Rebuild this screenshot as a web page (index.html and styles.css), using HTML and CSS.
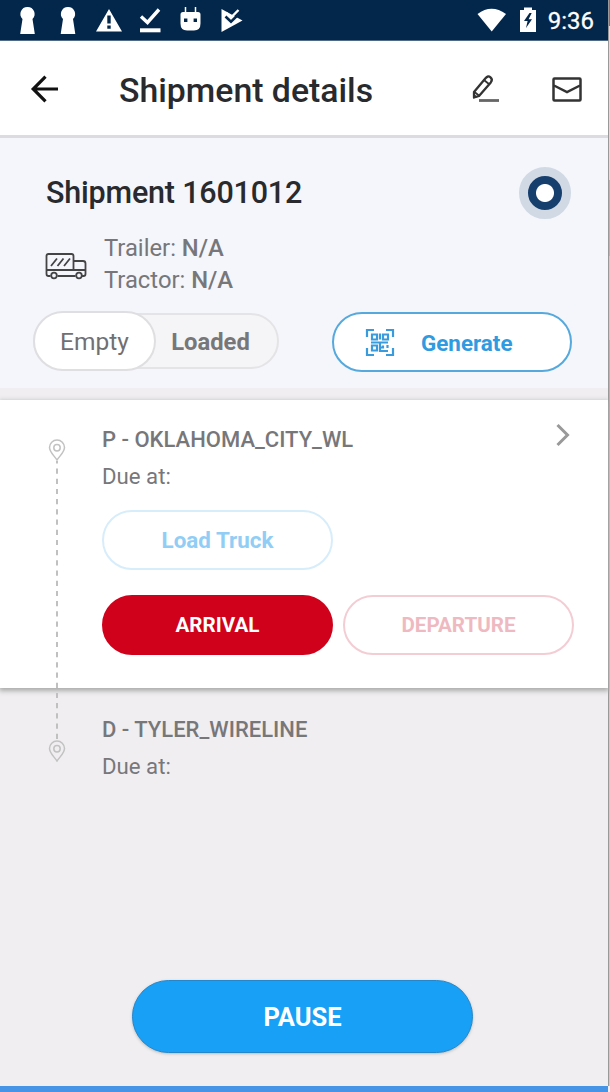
FILE: index.html
```html
<!DOCTYPE html>
<html lang="en">
  <head>
    <meta charset="UTF-8" />
    <meta name="viewport" content="width=device-width, initial-scale=1.0" />
    <title>Shipment details</title>
    <link rel="stylesheet" href="styles.css">
  </head>
  <body>
    <div class="screen">
      <div class="phone">
        <div class="status-bar">
          <svg class="status-icons" width="260" height="41" viewBox="0 0 260 41" fill="#fff">
            <!-- keyholes -->
            <path d="M27.500 7a7 7 0 0 1 5 12l2.300 15H20.200l2.300-15a7 7 0 0 1 5-12z" />
            <path d="M68 7a7 7 0 0 1 5 12l2.300 15H60.700L63 19a7 7 0 0 1 5-12z" />
            <!-- warning -->
            <path fill-rule="evenodd" d="M109 9l13 22.500H96zM107.300 15.500v8h3.400v-8zM107.300 25.500v3.300h3.400v-3.300z" />
            <!-- done -->
            <path d="M141 16.500l6.500 6L159 9.500" fill="none" stroke="#fff" stroke-width="3.400" />
            <rect x="140" y="28.300" width="20.500" height="4" />
            <!-- android -->
            <path d="M185.500 7v7M195.500 7v7" stroke="#fff" stroke-width="1.500" />
            <path fill-rule="evenodd" d="M183 12h15q2.500 0 2.500 2.500v9q0 7-6.500 7h-7q-6.500 0-6.500-7v-9q0-2.500 2.500-2.500zM184 18.500v3.400h3.400v-3.400zM193.600 18.500v3.400h3.400v-3.400z" />
            <!-- play check -->
            <path d="M221.500 9L242.500 20.500 221.500 32z" />
            <path d="M225.500 16.500l5.500 5.300L243 10" fill="none" stroke="#03264b" stroke-width="2.600" />
            <path d="M226.500 13l4.500 4.500L238.500 10" fill="none" stroke="#fff" stroke-width="2.400" />
          </svg>
          <div class="status-right">
            <svg width="30" height="24" viewBox="0 0 30 24" fill="#fff">
              <path d="M0.500 6Q14.500-4.500 29 6L14.700 23.500z" />
            </svg>
            <svg width="18" height="26" viewBox="0 0 18 26">
              <path fill="#fff" d="M5 0.500h8v2.500h4v22H1V3h4z" />
              <path fill="#03264b" d="M10.500 6L5 14h3.600L7 21l6-8.800H9.600L12.700 6z" />
            </svg>
            <span class="clock">9:36</span>
          </div>
        </div>

        <div class="header">
          <svg class="back" width="30" height="28" viewBox="0 0 30 28" fill="none" stroke="#111" stroke-width="3.200">
            <path d="M28 14H4M15.500 1.700L3.200 14 15.500 26.300" />
          </svg>
          <h1>Shipment details</h1>
          <div class="header-actions">
            <svg width="28" height="28" viewBox="0 0 28 28" fill="none" stroke="#333" stroke-width="2.300">
              <path d="M2 22.500V17L13.500 3.200q2.500-3 5-.8t.3 5L7 21z" stroke-linejoin="round" />
              <path d="M12 5l5.500 4.500M2.500 17l5 4" stroke-width="1.800" />
              <path d="M1.300 23.500v-5l4.500 3.500z" fill="#333" stroke="none" />
              <path d="M7 25.500h20" stroke="#666" stroke-width="2.800" />
            </svg>
            <svg width="30" height="25" viewBox="0 0 30 25" fill="none" stroke="#333" stroke-width="2.500">
              <rect x="1.500" y="1.500" width="27" height="22" rx="1" />
              <path d="M2 8.500l13 6.500 13-6.500" />
            </svg>
          </div>
        </div>

        <div class="summary">
          <div class="summary-top">
            <h2>Shipment 1601012</h2>
            <div class="radio"></div>
          </div>

          <div class="vehicle">
            <svg width="42" height="28" viewBox="0 0 42 28" fill="none" stroke="#444" stroke-width="1.800">
              <path d="M5.500 24H3.500Q1.500 24 1.500 22V4Q1.500 2 3.500 2h23Q28.500 2 28.500 4v14M12.500 24h18M37 24h1.500q2 0 2-2V11.500q0-2.500-2.500-2.500h-9.500M1.500 18h39" />
              <path d="M6 14L12 6.500M12.500 14L18.500 6.500M19 14L25 6.500" />
              <circle cx="9" cy="23.500" r="2.800" />
              <circle cx="34" cy="23.500" r="2.800" />
            </svg>
            <div class="vehicle-info">
              <div>Trailer: <b>N/A</b></div>
              <div>Tractor: <b>N/A</b></div>
            </div>
          </div>

          <div class="summary-actions">
            <div class="toggle">
              <div class="toggle-on">Empty</div>
              <div class="toggle-off">Loaded</div>
            </div>
            <button class="btn generate">
              <svg width="30" height="29" viewBox="0 0 30 29" fill="none" stroke="#3a9bdc" stroke-width="2.200">
                <path d="M2 9V2h7M21 2h7v7M28 20v7h-7M9 27H2v-7" />
                <path d="M7 6.500h5v5H7zM18 6.500h5v5h-5zM7 17.500h5v5H7z" />
                <path d="M15 5.500v6M6 14.500h9v4M15 14.500h8M18 17.500v2h-3v3.500h8M22.500 17v3" />
              </svg>
              <span>Generate</span>
            </button>
          </div>
        </div>

        <div class="stops">
          <div class="stop active">
            <div class="stop-head">
              <div class="stop-name">P - OKLAHOMA_CITY_WL</div>
              <svg width="16" height="24" viewBox="0 0 16 24" fill="none" stroke="#999" stroke-width="3">
                <path d="M2.500 2L12.500 12 2.500 22" />
              </svg>
            </div>
            <div class="due">Due at:</div>
            <button class="btn load">Load Truck</button>
            <div class="stop-buttons">
              <button class="btn arrival">ARRIVAL</button>
              <button class="btn departure">DEPARTURE</button>
            </div>
          </div>

          <div class="stop next">
            <div class="stop-name">D - TYLER_WIRELINE</div>
            <div class="due">Due at:</div>
          </div>

          <!-- route line laid over both stops -->
          <svg class="route" width="18" height="326" viewBox="0 0 18 326" fill="none" stroke="#c2c2c2" stroke-width="1.500">
            <path d="M9 21C6 16.500 1.500 13 1.500 8.500a7.500 7.500 0 0 1 15 0C16.500 13 12 16.500 9 21z" />
            <circle cx="9" cy="8.700" r="3.200" />
            <path d="M9 22V301" stroke="#c0c0c0" stroke-width="2" stroke-dasharray="5.200 5" stroke-dashoffset="2.700" />
            <path d="M9 322C6 317.500 1.500 314 1.500 309.500a7.500 7.500 0 0 1 15 0C16.500 314 12 317.500 9 322z" />
            <circle cx="9" cy="309.700" r="3.200" />
          </svg>
        </div>

        <div class="footer">
          <button class="btn pause">PAUSE</button>
        </div>
      </div>
      <div class="edge"></div>
    </div>
    <div class="bottom-line"></div>
  </body>
</html>
```
FILE: styles.css
```css
* {
  box-sizing: border-box;
}
body {
  margin: 0;
  width: 610px;
  height: 1092px;
  overflow: hidden;
  font-family: Roboto, sans-serif;
  background-color: #f0eef1;
  color: #77777a;
}
svg {
  display: block;
  flex: none;
}
h1,
h2 {
  margin: 0;
  font-weight: 500;
  color: #292a2d;
  white-space: nowrap;
}
.screen {
  display: flex;
  height: 1086px;
}
.phone {
  width: 608px;
  display: flex;
  flex-direction: column;
}
.edge {
  width: 2px;
  border-left: 1px solid #999;
  background: linear-gradient(
    #777 0 26px,
    #ddd 26px 180px,
    #9dbdcb 180px 256px,
    #ccc 256px 340px,
    #9dbdcb 340px 440px,
    #ccc 440px
  );
}
.bottom-line {
  width: 608px;
  height: 6px;
  background-color: #4594e5;
}
.status-bar {
  height: 41px;
  display: flex;
  justify-content: space-between;
  background-color: #03264b;
  border-bottom: 1px solid #4f6b88;
}
.status-right {
  display: flex;
  align-items: center;
  padding-right: 14px;
}
.status-right svg + svg {
  margin-left: 12px;
}
.clock {
  margin-left: 11px;
  padding-top: 2px;
  font-size: 24px;
  line-height: 41px;
  color: #fff;
  -webkit-text-stroke: 0.3px #fff;
}
.header {
  height: 97px;
  display: flex;
  align-items: center;
  padding: 2px 26px 0 30px;
  background-color: #fff;
  border-bottom: 3px solid #dcdce0;
}
.header h1 {
  flex: 1;
  margin-left: 59px;
  padding-top: 3px;
  font-size: 33.8px;
  line-height: 40px;
}
.header-actions {
  display: flex;
  align-items: center;
  gap: 52px;
}
.summary {
  height: 250px;
  padding: 30px 37px 0 33px;
  background-color: #f5f5fc;
}
.summary-top {
  display: flex;
  justify-content: space-between;
  height: 52px;
  padding-left: 13px;
}
.summary h2 {
  font-size: 30.5px;
  line-height: 49px;
  letter-spacing: -0.2px;
}
.radio {
  width: 52px;
  height: 52px;
  margin-top: -1px;
  border: 9px solid #d0d9e4;
  border-radius: 50%;
  background: radial-gradient(circle, #fff 8.500px, #173f6d 9.500px);
}
.vehicle {
  display: flex;
  align-items: center;
  margin-top: 12px;
  padding-left: 12px;
}
.vehicle-info {
  margin-left: 17px;
  font-size: 23.8px;
  line-height: 32px;
}
.vehicle svg {
  margin-top: 4px;
}
.vehicle-info b {
  font-weight: 500;
}
.summary-actions {
  display: flex;
  justify-content: space-between;
  margin: 16px -1px 0 0;
}
.toggle {
  display: flex;
  align-items: center;
  width: 246px;
  height: 56px;
  margin-top: 1px;
  border: 2px solid #e4e4e6;
  border-radius: 28px;
  background-color: #f5f5f7;
  line-height: 58px;
  text-align: center;
}
.toggle-on {
  flex: none;
  width: 123px;
  height: 60px;
  margin-left: -2px;
  border: 2px solid #dfdfe2;
  border-radius: 30px;
  background-color: #fff;
  font-size: 24.5px;
  color: #707073;
}
.toggle-off {
  width: 109px;
  padding-top: 2px;
  font-size: 23.8px;
  font-weight: 700;
}
.btn {
  display: block;
  height: 60px;
  padding: 0;
  border: 2px solid;
  border-radius: 30px;
  background-color: #fff;
  font-family: inherit;
  font-size: 22.4px;
  font-weight: 700;
}
.generate {
  display: flex;
  align-items: center;
  width: 240px;
  padding-left: 31px;
  border-color: #55a9dc;
  color: #2f9be0;
}
.generate span {
  margin-left: 26px;
  padding-top: 2px;
}
.stops {
  position: relative;
  margin-top: 12px;
}
.stop {
  padding: 26px 34px 0 102px;
}
.active {
  height: 288px;
  background-color: #fff;
  box-shadow: 0 2px 5px 1px #aaa;
}
.next {
  padding-top: 28px;
}
.stop-head {
  display: flex;
  justify-content: space-between;
}
.stop-head svg {
  margin: -3px 3px 0 0;
}
.stop-name {
  font-size: 22px;
  font-weight: 500;
  line-height: 28px;
}
.due {
  margin-top: 8px;
  font-size: 22.2px;
  line-height: 28px;
}
.load {
  width: 231px;
  margin-top: 20px;
  border-color: #d7edfb;
  color: #91cdf5;
}
.stop-buttons {
  display: flex;
  gap: 10px;
  margin-top: 25px;
}
.arrival {
  width: 231px;
  border-color: #d0021b;
  background-color: #d0021b;
  font-size: 20.6px;
  color: #fff;
}
.departure {
  width: 231px;
  border-color: #f3cdd3;
  font-size: 20.6px;
  color: #efb9c1;
}
.route {
  position: absolute;
  top: 39px;
  left: 48px;
}
.footer {
  margin: auto auto 33px 132px;
}
.pause {
  width: 341px;
  height: 73px;
  border: 1px solid #2487cb;
  border-radius: 37px;
  background-color: #18a0f7;
  box-shadow: 0 1px 3px #bbb;
  font-size: 25.5px;
  color: #fff;
}
```
